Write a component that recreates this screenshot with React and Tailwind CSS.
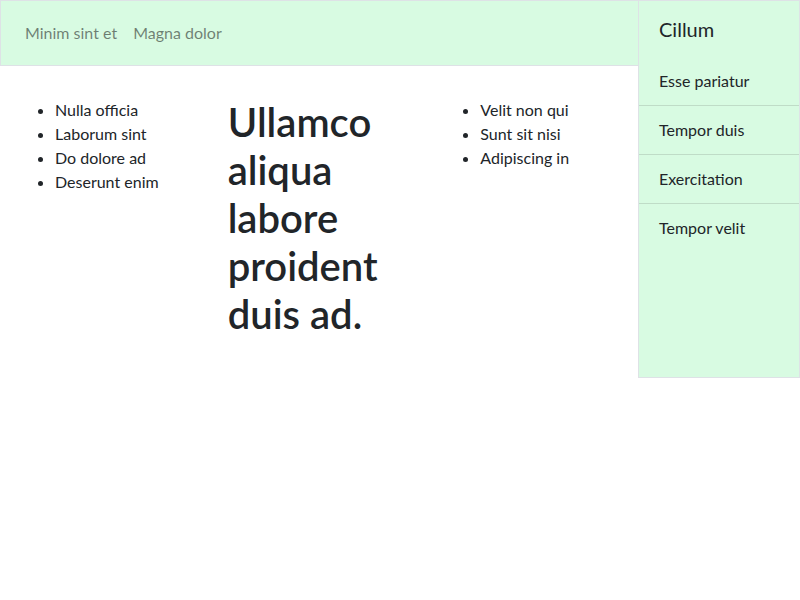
import React from "react";

const leftItems = ["Nulla officia", "Laborum sint", "Do dolore ad", "Deserunt enim"];
const rightItems = ["Velit non qui", "Sunt sit nisi", "Adipiscing in"];
const sideItems = ["Esse pariatur", "Tempor duis", "Exercitation", "Tempor velit"];

const font = { fontFamily: 'Lato, "Open Sans", sans-serif' };

export default function App() {
  return (
    <div className="relative w-[800px] h-[600px] bg-white text-[#212529]" style={font}>
      {/* Navbar */}
      <nav className="h-[66px] w-full border border-[#dee2e6] bg-[#d8fbe2] flex items-center px-4">
        <a className="px-2 text-base leading-6 text-black/50">Minim sint et</a>
        <a className="px-2 text-base leading-6 text-black/50">Magna dolor</a>
      </nav>

      {/* Main content */}
      <div className="w-[638px] pt-8 grid grid-cols-3">
        <div className="px-[15px]">
          <ul className="list-disc pl-10 text-base leading-6">
            {leftItems.map((item) => (
              <li key={item}>{item}</li>
            ))}
          </ul>
        </div>
        <div className="px-[15px]">
          <h1 className="text-[40px] leading-[48px] font-semibold">
            Ullamco aliqua labore proident duis ad.
          </h1>
        </div>
        <div className="px-[15px]">
          <ul className="list-disc pl-10 text-base leading-6">
            {rightItems.map((item) => (
              <li key={item}>{item}</li>
            ))}
          </ul>
        </div>
      </div>

      {/* Sidebar */}
      <aside className="absolute top-0 right-0 w-[162px] h-[378px] border border-[#dee2e6] bg-[#d8fbe2]">
        <div className="h-[56px] pl-5 pt-[13px] text-xl leading-[30px]">Cillum</div>
        <div className="flex flex-col">
          {sideItems.map((item, i) => (
            <div
              key={item}
              className={
                i < sideItems.length - 1
                  ? "pl-5 py-3 text-base leading-6 border-b border-[#bfdcc7]"
                  : "pl-5 py-3 text-base leading-6"
              }
            >
              {item}
            </div>
          ))}
        </div>
      </aside>
    </div>
  );
}
